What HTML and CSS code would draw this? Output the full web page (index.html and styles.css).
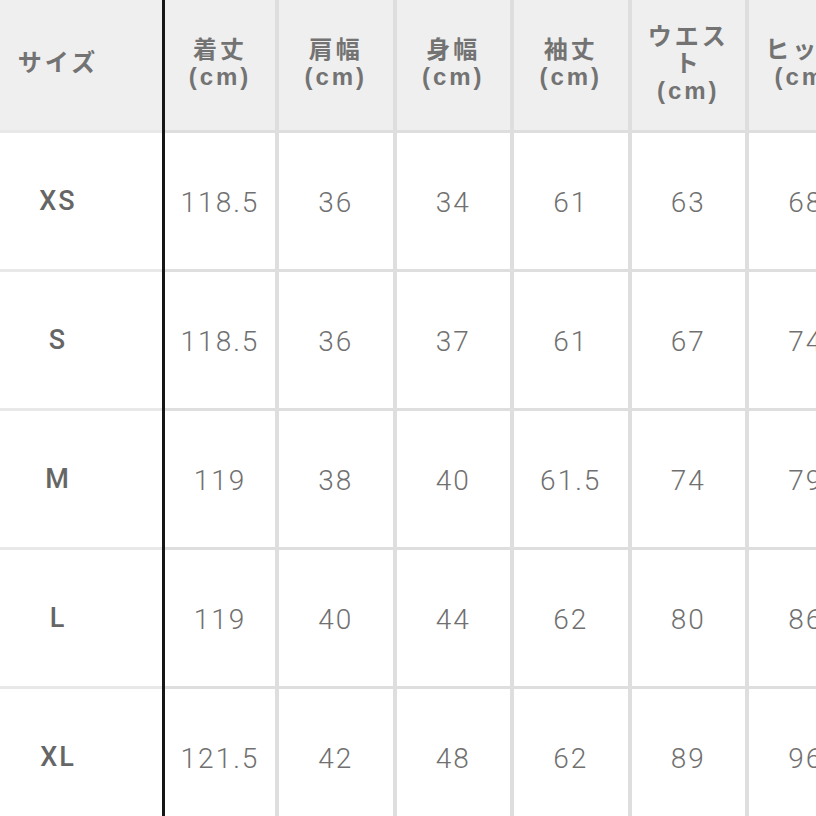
FILE: index.html
```html
<!DOCTYPE html>
<html lang="ja">
<head>
<meta charset="utf-8">
<title>サイズ表</title>
<link rel="stylesheet" href="styles.css">
</head>
<body>
<div class="chart">
  <div class="sizes">
    <div class="cell head size-head">サイズ</div>
    <div class="cell size">XS</div>
    <div class="cell size">S</div>
    <div class="cell size">M</div>
    <div class="cell size">L</div>
    <div class="cell size">XL</div>
  </div>
  <div class="divider"></div>
  <div class="data">
    <div class="cell head"><span>着丈</span><span class="unit">(cm)</span></div>
    <div class="cell head"><span>肩幅</span><span class="unit">(cm)</span></div>
    <div class="cell head"><span>身幅</span><span class="unit">(cm)</span></div>
    <div class="cell head"><span>袖丈</span><span class="unit">(cm)</span></div>
    <div class="cell head"><span>ウエスト</span><span class="unit">(cm)</span></div>
    <div class="cell head"><span>ヒップ</span><span class="unit">(cm)</span></div>

    <div class="cell num">118.5</div><div class="cell num">36</div><div class="cell num">34</div><div class="cell num">61</div><div class="cell num">63</div><div class="cell num">68</div>
    <div class="cell num">118.5</div><div class="cell num">36</div><div class="cell num">37</div><div class="cell num">61</div><div class="cell num">67</div><div class="cell num">74</div>
    <div class="cell num">119</div><div class="cell num">38</div><div class="cell num">40</div><div class="cell num">61.5</div><div class="cell num">74</div><div class="cell num">79</div>
    <div class="cell num">119</div><div class="cell num">40</div><div class="cell num">44</div><div class="cell num">62</div><div class="cell num">80</div><div class="cell num">86</div>
    <div class="cell num">121.5</div><div class="cell num">42</div><div class="cell num">48</div><div class="cell num">62</div><div class="cell num">89</div><div class="cell num">96</div>
  </div>
</div>
</body>
</html>
```
FILE: styles.css
```css
html, body {
  margin: 0;
  padding: 0;
  background: #ffffff;
  overflow: hidden;
  width: 816px;
  height: 816px;
}

.chart {
  display: flex;
  width: 1000px;
  align-items: stretch;
}

.sizes {
  width: 162px;
  flex: none;
  display: grid;
  grid-template-rows: 130px repeat(5, 136px);
  row-gap: 3px;
  background: #e8e8e8;
}

.divider {
  width: 3px;
  flex: none;
  background: #161616;
}

.data {
  flex: none;
  display: grid;
  grid-template-columns: 110px repeat(5, 113.5px);
  grid-template-rows: 130px repeat(5, 136px);
  gap: 3px 4px;
  background: #dedede;
}

.cell {
  background: #ffffff;
  display: flex;
  flex-direction: column;
  align-items: center;
  justify-content: center;
  text-align: center;
}

.head {
  background: #efefef;
  color: #737373;
  font-family: "Liberation Sans", "Noto Sans CJK JP", sans-serif;
  font-weight: 700;
  font-size: 24px;
  line-height: 27px;
  letter-spacing: 3px;
  padding: 0 8px 4px;
}

.unit {
  display: block;
  font-size: 24px;
}

.size-head {
  padding: 0 46px 6px 0;
}

.size {
  padding-right: 46px;
  color: #666666;
  font-family: Roboto, "Liberation Sans", sans-serif;
  font-weight: 500;
  font-size: 27px;
  letter-spacing: 2px;
}

.num {
  color: #707070;
  font-family: Roboto, "Liberation Sans", sans-serif;
  font-weight: 300;
  font-size: 28px;
  letter-spacing: 2px;
  padding-top: 2px;
}
```
